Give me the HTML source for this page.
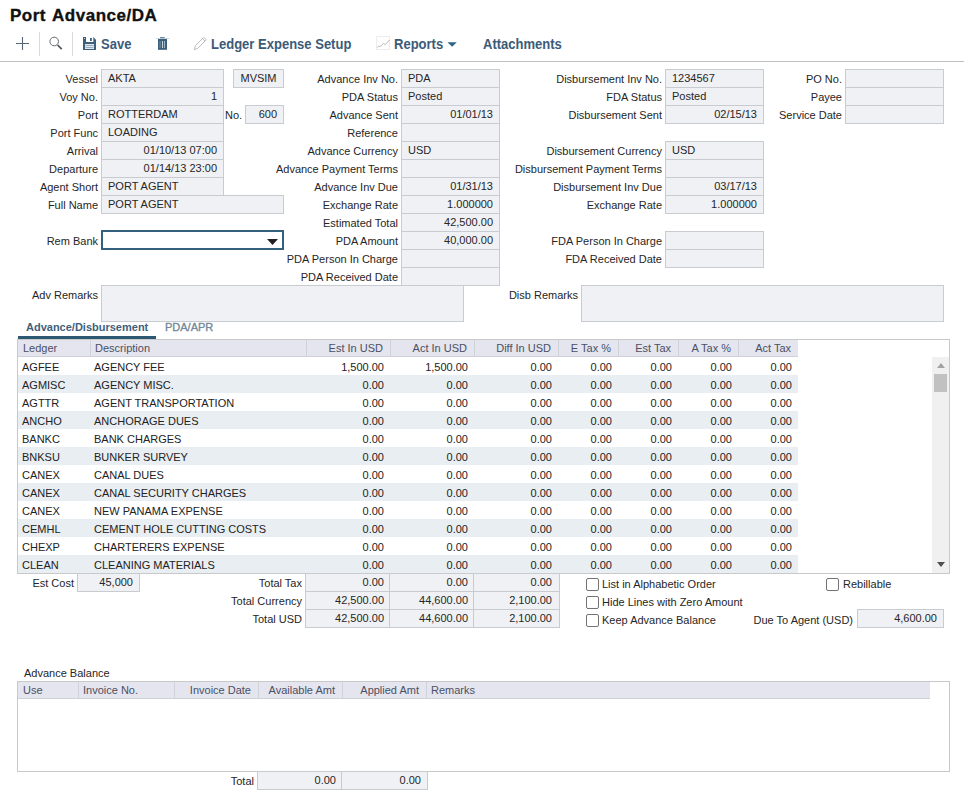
<!DOCTYPE html><html><head><meta charset="utf-8"><style>
*{margin:0;padding:0;box-sizing:content-box}
html,body{width:964px;height:796px;overflow:hidden;background:#fff}
body{position:relative;font-family:"Liberation Sans",sans-serif;font-size:11px;color:#333}
div{position:absolute;white-space:nowrap}
.lbl{color:#262626}
.box{background:#f0f1f4;border:1px solid #c8ccd1;padding:0 6px;box-sizing:border-box;color:#262626}
.tb{color:#3b5b78;font-weight:bold;font-size:14px;top:36px;line-height:16px;transform:scaleX(0.93);transform-origin:0 0}
.gh{background:#e4e5ee;border-bottom:1px solid #cfd1d9;color:#555}
.ghc{top:0;height:17px;line-height:17px;border-right:1px solid #d0d2da;box-sizing:border-box;padding:0 7px 0 5px}
.row{left:0;width:780px;height:18px}
.cell{top:0;height:18px;line-height:18px;box-sizing:border-box;padding:1px 7px 0 4px;color:#222}
.cb{width:11px;height:11px;border:1px solid #737373;border-radius:2px;background:#fff}
</style></head><body>
<div style="left:10px;top:6px;font-size:17px;font-weight:bold;color:#111;line-height:20px;letter-spacing:0.5px;word-spacing:1.5px;-webkit-text-stroke:0.35px #111">Port Advance/DA</div>
<svg style="position:absolute;left:0;top:0" width="964" height="62">
<path d="M16 43.5H29M22.5 37V50" stroke="#566676" stroke-width="1.1" fill="none"/>
<rect x="39" y="32" width="1" height="24" fill="#d9d9d9"/>
<circle cx="54.2" cy="41.5" r="4.3" stroke="#646a72" stroke-width="1" fill="none"/>
<path d="M57.6 45L61.7 49.2" stroke="#4d535a" stroke-width="1.7"/>
<rect x="72" y="32" width="1" height="24" fill="#d9d9d9"/>
<path d="M83 37H93.3L96 39.7V50H83Z" fill="#3b5f7d"/>
<rect x="86" y="37" width="7.3" height="5" fill="#fff"/>
<rect x="90" y="38" width="1.8" height="3" fill="#3b5f7d"/>
<rect x="84" y="38" width="1" height="0.8" fill="#dfe6ec"/>
<rect x="85" y="44" width="9" height="5" fill="#dfe6ec"/>
<rect x="85.5" y="45" width="8" height="0.8" fill="#8a9db0"/>
<rect x="85.5" y="47" width="8" height="0.8" fill="#8a9db0"/>
<rect x="156" y="38" width="13.3" height="0.9" fill="#c9ced4"/>
<rect x="160" y="37" width="4.7" height="1.2" fill="#6d8aa1"/>
<rect x="158" y="39" width="9" height="10.8" fill="#3b5f7d"/>
<rect x="159.6" y="41" width="0.9" height="7" fill="#7d98ad"/>
<rect x="162" y="41" width="1" height="7" fill="#c5d3dd"/>
<rect x="164" y="41" width="1" height="7" fill="#9fb4c4"/>
<path d="M194.4 49.6L195.3 45.8L203.8 37.3L206.3 39.8L197.8 48.3Z" stroke="#b3b3b3" stroke-width="0.9" fill="none"/>
<path d="M202.6 38.5L205.1 41" stroke="#b3b3b3" stroke-width="0.9"/>
<rect x="376.5" y="36.5" width="13" height="13" fill="none" stroke="#ececec" stroke-width="1"/>
<path d="M377.3 47.6L378.5 46.2L380.3 46.6L383.4 43.3L385.3 44.6L389.6 40" stroke="#b0b0b0" stroke-width="0.9" fill="none"/>
<path d="M447.5 42.2H456.8L452.15 46.8Z" fill="#2f6586"/>
</svg>
<div class="tb" style="left:101px">Save</div>
<div class="tb" style="left:211px">Ledger Expense Setup</div>
<div class="tb" style="left:394px">Reports</div>
<div class="tb" style="left:483px">Attachments</div>
<div style="left:0;top:61px;width:964px;height:1px;background:#bdbfc3"></div>
<div class="lbl" style="right:866px;top:70px;height:18px;line-height:18px">Vessel</div>
<div class="box" style="left:101px;top:69px;width:123px;height:19px;line-height:17px;text-align:left;">AKTA</div>
<div class="lbl" style="right:866px;top:88px;height:18px;line-height:18px">Voy No.</div>
<div class="box" style="left:101px;top:87px;width:123px;height:19px;line-height:17px;text-align:right;">1</div>
<div class="lbl" style="right:866px;top:106px;height:18px;line-height:18px">Port</div>
<div class="box" style="left:101px;top:105px;width:123px;height:19px;line-height:17px;text-align:left;">ROTTERDAM</div>
<div class="lbl" style="right:866px;top:124px;height:18px;line-height:18px">Port Func</div>
<div class="box" style="left:101px;top:123px;width:123px;height:19px;line-height:17px;text-align:left;">LOADING</div>
<div class="lbl" style="right:866px;top:142px;height:18px;line-height:18px">Arrival</div>
<div class="box" style="left:101px;top:141px;width:123px;height:19px;line-height:17px;text-align:right;">01/10/13 07:00</div>
<div class="lbl" style="right:866px;top:160px;height:18px;line-height:18px">Departure</div>
<div class="box" style="left:101px;top:159px;width:123px;height:19px;line-height:17px;text-align:right;">01/14/13 23:00</div>
<div class="lbl" style="right:866px;top:178px;height:18px;line-height:18px">Agent Short</div>
<div class="box" style="left:101px;top:177px;width:123px;height:19px;line-height:17px;text-align:left;">PORT AGENT</div>
<div class="lbl" style="right:866px;top:196px;height:18px;line-height:18px">Full Name</div>
<div class="box" style="left:101px;top:195px;width:183px;height:19px;line-height:17px;text-align:left;">PORT AGENT</div>
<div class="box" style="left:233px;top:69px;width:51px;height:19px;line-height:17px;text-align:center;padding:0">MVSIM</div>
<div class="lbl" style="left:225px;top:106px;height:18px;line-height:18px;">No.</div>
<div class="box" style="left:245px;top:105px;width:39px;height:19px;line-height:17px;text-align:right;">600</div>
<div class="lbl" style="right:866px;top:232px;height:18px;line-height:18px">Rem Bank</div>
<div style="left:101px;top:230px;width:179px;height:16px;border:2px solid #33607c;background:#fff"></div>
<svg style="position:absolute;left:267px;top:239px" width="11" height="6"><path d="M0 0H11L5.5 6Z" fill="#222"/></svg>
<div class="lbl" style="right:566px;top:70px;height:18px;line-height:18px">Advance Inv No.</div>
<div class="box" style="left:401px;top:69px;width:99px;height:19px;line-height:17px;text-align:left;">PDA</div>
<div class="lbl" style="right:566px;top:88px;height:18px;line-height:18px">PDA Status</div>
<div class="box" style="left:401px;top:87px;width:99px;height:19px;line-height:17px;text-align:left;">Posted</div>
<div class="lbl" style="right:566px;top:106px;height:18px;line-height:18px">Advance Sent</div>
<div class="box" style="left:401px;top:105px;width:99px;height:19px;line-height:17px;text-align:right;">01/01/13</div>
<div class="lbl" style="right:566px;top:124px;height:18px;line-height:18px">Reference</div>
<div class="box" style="left:401px;top:123px;width:99px;height:19px;line-height:17px;text-align:left;"></div>
<div class="lbl" style="right:566px;top:142px;height:18px;line-height:18px">Advance Currency</div>
<div class="box" style="left:401px;top:141px;width:99px;height:19px;line-height:17px;text-align:left;">USD</div>
<div class="lbl" style="right:566px;top:160px;height:18px;line-height:18px">Advance Payment Terms</div>
<div class="box" style="left:401px;top:159px;width:99px;height:19px;line-height:17px;text-align:left;"></div>
<div class="lbl" style="right:566px;top:178px;height:18px;line-height:18px">Advance Inv Due</div>
<div class="box" style="left:401px;top:177px;width:99px;height:19px;line-height:17px;text-align:right;">01/31/13</div>
<div class="lbl" style="right:566px;top:196px;height:18px;line-height:18px">Exchange Rate</div>
<div class="box" style="left:401px;top:195px;width:99px;height:19px;line-height:17px;text-align:right;">1.000000</div>
<div class="lbl" style="right:566px;top:214px;height:18px;line-height:18px">Estimated Total</div>
<div class="box" style="left:401px;top:213px;width:99px;height:19px;line-height:17px;text-align:right;">42,500.00</div>
<div class="lbl" style="right:566px;top:232px;height:18px;line-height:18px">PDA Amount</div>
<div class="box" style="left:401px;top:231px;width:99px;height:19px;line-height:17px;text-align:right;">40,000.00</div>
<div class="lbl" style="right:566px;top:250px;height:18px;line-height:18px">PDA Person In Charge</div>
<div class="box" style="left:401px;top:249px;width:99px;height:19px;line-height:17px;text-align:left;"></div>
<div class="lbl" style="right:566px;top:268px;height:18px;line-height:18px">PDA Received Date</div>
<div class="box" style="left:401px;top:267px;width:99px;height:19px;line-height:17px;text-align:left;"></div>
<div class="lbl" style="right:302px;top:70px;height:18px;line-height:18px">Disbursement Inv No.</div>
<div class="box" style="left:665px;top:69px;width:99px;height:19px;line-height:17px;text-align:left;">1234567</div>
<div class="lbl" style="right:302px;top:88px;height:18px;line-height:18px">FDA Status</div>
<div class="box" style="left:665px;top:87px;width:99px;height:19px;line-height:17px;text-align:left;">Posted</div>
<div class="lbl" style="right:302px;top:106px;height:18px;line-height:18px">Disbursement Sent</div>
<div class="box" style="left:665px;top:105px;width:99px;height:19px;line-height:17px;text-align:right;">02/15/13</div>
<div class="lbl" style="right:302px;top:142px;height:18px;line-height:18px">Disbursement Currency</div>
<div class="box" style="left:665px;top:141px;width:99px;height:19px;line-height:17px;text-align:left;">USD</div>
<div class="lbl" style="right:302px;top:160px;height:18px;line-height:18px">Disbursement Payment Terms</div>
<div class="box" style="left:665px;top:159px;width:99px;height:19px;line-height:17px;text-align:left;"></div>
<div class="lbl" style="right:302px;top:178px;height:18px;line-height:18px">Disbursement Inv Due</div>
<div class="box" style="left:665px;top:177px;width:99px;height:19px;line-height:17px;text-align:right;">03/17/13</div>
<div class="lbl" style="right:302px;top:196px;height:18px;line-height:18px">Exchange Rate</div>
<div class="box" style="left:665px;top:195px;width:99px;height:19px;line-height:17px;text-align:right;">1.000000</div>
<div class="lbl" style="right:302px;top:232px;height:18px;line-height:18px">FDA Person In Charge</div>
<div class="box" style="left:665px;top:231px;width:99px;height:19px;line-height:17px;text-align:left;"></div>
<div class="lbl" style="right:302px;top:250px;height:18px;line-height:18px">FDA Received Date</div>
<div class="box" style="left:665px;top:249px;width:99px;height:19px;line-height:17px;text-align:left;"></div>
<div class="lbl" style="right:122px;top:70px;height:18px;line-height:18px">PO No.</div>
<div class="box" style="left:845px;top:69px;width:99px;height:19px;line-height:17px;text-align:left;"></div>
<div class="lbl" style="right:122px;top:88px;height:18px;line-height:18px">Payee</div>
<div class="box" style="left:845px;top:87px;width:99px;height:19px;line-height:17px;text-align:left;"></div>
<div class="lbl" style="right:122px;top:106px;height:18px;line-height:18px">Service Date</div>
<div class="box" style="left:845px;top:105px;width:99px;height:19px;line-height:17px;text-align:left;"></div>
<div class="lbl" style="right:866px;top:286px;height:18px;line-height:18px">Adv Remarks</div>
<div class="box" style="left:101px;top:285px;width:363px;height:37px;line-height:35px;text-align:left;"></div>
<div class="lbl" style="right:386px;top:286px;height:18px;line-height:18px">Disb Remarks</div>
<div class="box" style="left:581px;top:285px;width:363px;height:37px;line-height:35px;text-align:left;"></div>
<div style="left:26px;top:319px;line-height:16px;font-weight:bold;color:#3f5f7a">Advance/Disbursement</div>
<div style="left:165px;top:319px;line-height:16px;color:#73889a;-webkit-text-stroke:0.35px #73889a">PDA/APR</div>
<div style="left:18px;top:336px;width:138px;height:3px;background:#2d5872"></div>
<div style="left:17px;top:339px;width:931px;height:233px;border:1px solid #c9c9c9;background:#fff"></div>
<div class="gh" style="left:18px;top:340px;width:780px;height:16px"></div>
<div class="ghc" style="left:18px;top:340px;width:73px;height:16px;line-height:16px;text-align:left;color:#4b5064;">Ledger</div>
<div class="ghc" style="left:90px;top:340px;width:217px;height:16px;line-height:16px;text-align:left;color:#4b5064;">Description</div>
<div class="ghc" style="left:306px;top:340px;width:85px;height:16px;line-height:16px;text-align:right;color:#4b5064;">Est In USD</div>
<div class="ghc" style="left:390px;top:340px;width:85px;height:16px;line-height:16px;text-align:right;color:#4b5064;">Act In USD</div>
<div class="ghc" style="left:474px;top:340px;width:85px;height:16px;line-height:16px;text-align:right;color:#4b5064;">Diff In USD</div>
<div class="ghc" style="left:558px;top:340px;width:61px;height:16px;line-height:16px;text-align:right;color:#4b5064;">E Tax %</div>
<div class="ghc" style="left:618px;top:340px;width:61px;height:16px;line-height:16px;text-align:right;color:#4b5064;">Est Tax</div>
<div class="ghc" style="left:678px;top:340px;width:61px;height:16px;line-height:16px;text-align:right;color:#4b5064;">A Tax %</div>
<div class="ghc" style="left:738px;top:340px;width:60px;height:16px;line-height:16px;text-align:right;color:#4b5064;border-right:none">Act Tax</div>
<div style="left:18px;top:357px;width:780px;height:18px;background:#fff"></div>
<div class="cell" style="left:18px;top:357px;width:73px;text-align:left">AGFEE</div>
<div class="cell" style="left:90px;top:357px;width:217px;text-align:left">AGENCY FEE</div>
<div class="cell" style="left:306px;top:357px;width:85px;text-align:right">1,500.00</div>
<div class="cell" style="left:390px;top:357px;width:85px;text-align:right">1,500.00</div>
<div class="cell" style="left:474px;top:357px;width:85px;text-align:right">0.00</div>
<div class="cell" style="left:558px;top:357px;width:61px;text-align:right">0.00</div>
<div class="cell" style="left:618px;top:357px;width:61px;text-align:right">0.00</div>
<div class="cell" style="left:678px;top:357px;width:61px;text-align:right">0.00</div>
<div class="cell" style="left:738px;top:357px;width:61px;text-align:right">0.00</div>
<div style="left:18px;top:375px;width:780px;height:18px;background:#e9eef2"></div>
<div class="cell" style="left:18px;top:375px;width:73px;text-align:left">AGMISC</div>
<div class="cell" style="left:90px;top:375px;width:217px;text-align:left">AGENCY MISC.</div>
<div class="cell" style="left:306px;top:375px;width:85px;text-align:right">0.00</div>
<div class="cell" style="left:390px;top:375px;width:85px;text-align:right">0.00</div>
<div class="cell" style="left:474px;top:375px;width:85px;text-align:right">0.00</div>
<div class="cell" style="left:558px;top:375px;width:61px;text-align:right">0.00</div>
<div class="cell" style="left:618px;top:375px;width:61px;text-align:right">0.00</div>
<div class="cell" style="left:678px;top:375px;width:61px;text-align:right">0.00</div>
<div class="cell" style="left:738px;top:375px;width:61px;text-align:right">0.00</div>
<div style="left:18px;top:393px;width:780px;height:18px;background:#fff"></div>
<div class="cell" style="left:18px;top:393px;width:73px;text-align:left">AGTTR</div>
<div class="cell" style="left:90px;top:393px;width:217px;text-align:left">AGENT TRANSPORTATION</div>
<div class="cell" style="left:306px;top:393px;width:85px;text-align:right">0.00</div>
<div class="cell" style="left:390px;top:393px;width:85px;text-align:right">0.00</div>
<div class="cell" style="left:474px;top:393px;width:85px;text-align:right">0.00</div>
<div class="cell" style="left:558px;top:393px;width:61px;text-align:right">0.00</div>
<div class="cell" style="left:618px;top:393px;width:61px;text-align:right">0.00</div>
<div class="cell" style="left:678px;top:393px;width:61px;text-align:right">0.00</div>
<div class="cell" style="left:738px;top:393px;width:61px;text-align:right">0.00</div>
<div style="left:18px;top:411px;width:780px;height:18px;background:#e9eef2"></div>
<div class="cell" style="left:18px;top:411px;width:73px;text-align:left">ANCHO</div>
<div class="cell" style="left:90px;top:411px;width:217px;text-align:left">ANCHORAGE DUES</div>
<div class="cell" style="left:306px;top:411px;width:85px;text-align:right">0.00</div>
<div class="cell" style="left:390px;top:411px;width:85px;text-align:right">0.00</div>
<div class="cell" style="left:474px;top:411px;width:85px;text-align:right">0.00</div>
<div class="cell" style="left:558px;top:411px;width:61px;text-align:right">0.00</div>
<div class="cell" style="left:618px;top:411px;width:61px;text-align:right">0.00</div>
<div class="cell" style="left:678px;top:411px;width:61px;text-align:right">0.00</div>
<div class="cell" style="left:738px;top:411px;width:61px;text-align:right">0.00</div>
<div style="left:18px;top:429px;width:780px;height:18px;background:#fff"></div>
<div class="cell" style="left:18px;top:429px;width:73px;text-align:left">BANKC</div>
<div class="cell" style="left:90px;top:429px;width:217px;text-align:left">BANK CHARGES</div>
<div class="cell" style="left:306px;top:429px;width:85px;text-align:right">0.00</div>
<div class="cell" style="left:390px;top:429px;width:85px;text-align:right">0.00</div>
<div class="cell" style="left:474px;top:429px;width:85px;text-align:right">0.00</div>
<div class="cell" style="left:558px;top:429px;width:61px;text-align:right">0.00</div>
<div class="cell" style="left:618px;top:429px;width:61px;text-align:right">0.00</div>
<div class="cell" style="left:678px;top:429px;width:61px;text-align:right">0.00</div>
<div class="cell" style="left:738px;top:429px;width:61px;text-align:right">0.00</div>
<div style="left:18px;top:447px;width:780px;height:18px;background:#e9eef2"></div>
<div class="cell" style="left:18px;top:447px;width:73px;text-align:left">BNKSU</div>
<div class="cell" style="left:90px;top:447px;width:217px;text-align:left">BUNKER SURVEY</div>
<div class="cell" style="left:306px;top:447px;width:85px;text-align:right">0.00</div>
<div class="cell" style="left:390px;top:447px;width:85px;text-align:right">0.00</div>
<div class="cell" style="left:474px;top:447px;width:85px;text-align:right">0.00</div>
<div class="cell" style="left:558px;top:447px;width:61px;text-align:right">0.00</div>
<div class="cell" style="left:618px;top:447px;width:61px;text-align:right">0.00</div>
<div class="cell" style="left:678px;top:447px;width:61px;text-align:right">0.00</div>
<div class="cell" style="left:738px;top:447px;width:61px;text-align:right">0.00</div>
<div style="left:18px;top:465px;width:780px;height:18px;background:#fff"></div>
<div class="cell" style="left:18px;top:465px;width:73px;text-align:left">CANEX</div>
<div class="cell" style="left:90px;top:465px;width:217px;text-align:left">CANAL DUES</div>
<div class="cell" style="left:306px;top:465px;width:85px;text-align:right">0.00</div>
<div class="cell" style="left:390px;top:465px;width:85px;text-align:right">0.00</div>
<div class="cell" style="left:474px;top:465px;width:85px;text-align:right">0.00</div>
<div class="cell" style="left:558px;top:465px;width:61px;text-align:right">0.00</div>
<div class="cell" style="left:618px;top:465px;width:61px;text-align:right">0.00</div>
<div class="cell" style="left:678px;top:465px;width:61px;text-align:right">0.00</div>
<div class="cell" style="left:738px;top:465px;width:61px;text-align:right">0.00</div>
<div style="left:18px;top:483px;width:780px;height:18px;background:#e9eef2"></div>
<div class="cell" style="left:18px;top:483px;width:73px;text-align:left">CANEX</div>
<div class="cell" style="left:90px;top:483px;width:217px;text-align:left">CANAL SECURITY CHARGES</div>
<div class="cell" style="left:306px;top:483px;width:85px;text-align:right">0.00</div>
<div class="cell" style="left:390px;top:483px;width:85px;text-align:right">0.00</div>
<div class="cell" style="left:474px;top:483px;width:85px;text-align:right">0.00</div>
<div class="cell" style="left:558px;top:483px;width:61px;text-align:right">0.00</div>
<div class="cell" style="left:618px;top:483px;width:61px;text-align:right">0.00</div>
<div class="cell" style="left:678px;top:483px;width:61px;text-align:right">0.00</div>
<div class="cell" style="left:738px;top:483px;width:61px;text-align:right">0.00</div>
<div style="left:18px;top:501px;width:780px;height:18px;background:#fff"></div>
<div class="cell" style="left:18px;top:501px;width:73px;text-align:left">CANEX</div>
<div class="cell" style="left:90px;top:501px;width:217px;text-align:left">NEW PANAMA EXPENSE</div>
<div class="cell" style="left:306px;top:501px;width:85px;text-align:right">0.00</div>
<div class="cell" style="left:390px;top:501px;width:85px;text-align:right">0.00</div>
<div class="cell" style="left:474px;top:501px;width:85px;text-align:right">0.00</div>
<div class="cell" style="left:558px;top:501px;width:61px;text-align:right">0.00</div>
<div class="cell" style="left:618px;top:501px;width:61px;text-align:right">0.00</div>
<div class="cell" style="left:678px;top:501px;width:61px;text-align:right">0.00</div>
<div class="cell" style="left:738px;top:501px;width:61px;text-align:right">0.00</div>
<div style="left:18px;top:519px;width:780px;height:18px;background:#e9eef2"></div>
<div class="cell" style="left:18px;top:519px;width:73px;text-align:left">CEMHL</div>
<div class="cell" style="left:90px;top:519px;width:217px;text-align:left">CEMENT HOLE CUTTING COSTS</div>
<div class="cell" style="left:306px;top:519px;width:85px;text-align:right">0.00</div>
<div class="cell" style="left:390px;top:519px;width:85px;text-align:right">0.00</div>
<div class="cell" style="left:474px;top:519px;width:85px;text-align:right">0.00</div>
<div class="cell" style="left:558px;top:519px;width:61px;text-align:right">0.00</div>
<div class="cell" style="left:618px;top:519px;width:61px;text-align:right">0.00</div>
<div class="cell" style="left:678px;top:519px;width:61px;text-align:right">0.00</div>
<div class="cell" style="left:738px;top:519px;width:61px;text-align:right">0.00</div>
<div style="left:18px;top:537px;width:780px;height:18px;background:#fff"></div>
<div class="cell" style="left:18px;top:537px;width:73px;text-align:left">CHEXP</div>
<div class="cell" style="left:90px;top:537px;width:217px;text-align:left">CHARTERERS EXPENSE</div>
<div class="cell" style="left:306px;top:537px;width:85px;text-align:right">0.00</div>
<div class="cell" style="left:390px;top:537px;width:85px;text-align:right">0.00</div>
<div class="cell" style="left:474px;top:537px;width:85px;text-align:right">0.00</div>
<div class="cell" style="left:558px;top:537px;width:61px;text-align:right">0.00</div>
<div class="cell" style="left:618px;top:537px;width:61px;text-align:right">0.00</div>
<div class="cell" style="left:678px;top:537px;width:61px;text-align:right">0.00</div>
<div class="cell" style="left:738px;top:537px;width:61px;text-align:right">0.00</div>
<div style="left:18px;top:555px;width:780px;height:18px;background:#e9eef2"></div>
<div class="cell" style="left:18px;top:555px;width:73px;text-align:left">CLEAN</div>
<div class="cell" style="left:90px;top:555px;width:217px;text-align:left">CLEANING MATERIALS</div>
<div class="cell" style="left:306px;top:555px;width:85px;text-align:right">0.00</div>
<div class="cell" style="left:390px;top:555px;width:85px;text-align:right">0.00</div>
<div class="cell" style="left:474px;top:555px;width:85px;text-align:right">0.00</div>
<div class="cell" style="left:558px;top:555px;width:61px;text-align:right">0.00</div>
<div class="cell" style="left:618px;top:555px;width:61px;text-align:right">0.00</div>
<div class="cell" style="left:678px;top:555px;width:61px;text-align:right">0.00</div>
<div class="cell" style="left:738px;top:555px;width:61px;text-align:right">0.00</div>
<div style="left:932px;top:357px;width:17px;height:216px;background:#f0f0f0"></div>
<svg style="position:absolute;left:937px;top:363px" width="8" height="5"><path d="M0 5H8L4 0Z" fill="#a3a3a3"/></svg>
<div style="left:934px;top:374px;width:13px;height:18px;background:#c1c1c1"></div>
<svg style="position:absolute;left:937px;top:562px" width="8" height="5"><path d="M0 0H8L4 5Z" fill="#505050"/></svg>
<div class="lbl" style="right:890px;top:574px;height:18px;line-height:18px">Est Cost</div>
<div class="box" style="left:77px;top:573px;width:63px;height:19px;line-height:17px;text-align:right;">45,000</div>
<div class="lbl" style="right:662px;top:574px;height:18px;line-height:18px">Total Tax</div>
<div class="box" style="left:305px;top:573px;width:85px;height:19px;line-height:17px;text-align:right;padding-right:5px">0.00</div>
<div class="box" style="left:389px;top:573px;width:85px;height:19px;line-height:17px;text-align:right;padding-right:5px">0.00</div>
<div class="box" style="left:473px;top:573px;width:87px;height:19px;line-height:17px;text-align:right;padding-right:7px">0.00</div>
<div class="lbl" style="right:662px;top:592px;height:18px;line-height:18px">Total Currency</div>
<div class="box" style="left:305px;top:591px;width:85px;height:19px;line-height:17px;text-align:right;padding-right:5px">42,500.00</div>
<div class="box" style="left:389px;top:591px;width:85px;height:19px;line-height:17px;text-align:right;padding-right:5px">44,600.00</div>
<div class="box" style="left:473px;top:591px;width:87px;height:19px;line-height:17px;text-align:right;padding-right:7px">2,100.00</div>
<div class="lbl" style="right:662px;top:610px;height:18px;line-height:18px">Total USD</div>
<div class="box" style="left:305px;top:609px;width:85px;height:19px;line-height:17px;text-align:right;padding-right:5px">42,500.00</div>
<div class="box" style="left:389px;top:609px;width:85px;height:19px;line-height:17px;text-align:right;padding-right:5px">44,600.00</div>
<div class="box" style="left:473px;top:609px;width:87px;height:19px;line-height:17px;text-align:right;padding-right:7px">2,100.00</div>
<div class="cb" style="left:586px;top:578px"></div>
<div class="lbl" style="left:602px;top:575px;height:18px;line-height:18px;">List in Alphabetic Order</div>
<div class="cb" style="left:586px;top:596px"></div>
<div class="lbl" style="left:602px;top:593px;height:18px;line-height:18px;">Hide Lines with Zero Amount</div>
<div class="cb" style="left:586px;top:614px"></div>
<div class="lbl" style="left:602px;top:611px;height:18px;line-height:18px;">Keep Advance Balance</div>
<div class="cb" style="left:826px;top:578px"></div>
<div class="lbl" style="left:843px;top:575px;height:18px;line-height:18px;">Rebillable</div>
<div class="lbl" style="right:111px;top:611px;height:18px;line-height:18px">Due To Agent (USD)</div>
<div class="box" style="left:857px;top:609px;width:87px;height:19px;line-height:17px;text-align:right;">4,600.00</div>
<div class="lbl" style="left:24px;top:664px;height:18px;line-height:18px;">Advance Balance</div>
<div style="left:17px;top:681px;width:931px;height:89px;border:1px solid #c9c9c9;background:#fff"></div>
<div class="gh" style="left:18px;top:682px;width:912px;height:16px"></div>
<div class="ghc" style="left:18px;top:682px;width:61px;height:16px;line-height:16px;text-align:left;color:#4b5064;">Use</div>
<div class="ghc" style="left:78px;top:682px;width:97px;height:16px;line-height:16px;text-align:left;color:#4b5064;">Invoice No.</div>
<div class="ghc" style="left:174px;top:682px;width:85px;height:16px;line-height:16px;text-align:right;color:#4b5064;">Invoice Date</div>
<div class="ghc" style="left:258px;top:682px;width:85px;height:16px;line-height:16px;text-align:right;color:#4b5064;">Available Amt</div>
<div class="ghc" style="left:342px;top:682px;width:85px;height:16px;line-height:16px;text-align:right;color:#4b5064;">Applied Amt</div>
<div class="ghc" style="left:426px;top:682px;width:504px;height:16px;line-height:16px;text-align:left;color:#4b5064;border-right:none">Remarks</div>
<div class="lbl" style="right:710px;top:772px;height:18px;line-height:18px">Total</div>
<div class="box" style="left:257px;top:771px;width:85px;height:19px;line-height:17px;text-align:right;padding-right:5px">0.00</div>
<div class="box" style="left:341px;top:771px;width:87px;height:19px;line-height:17px;text-align:right;padding-right:6px">0.00</div>
</body></html>
